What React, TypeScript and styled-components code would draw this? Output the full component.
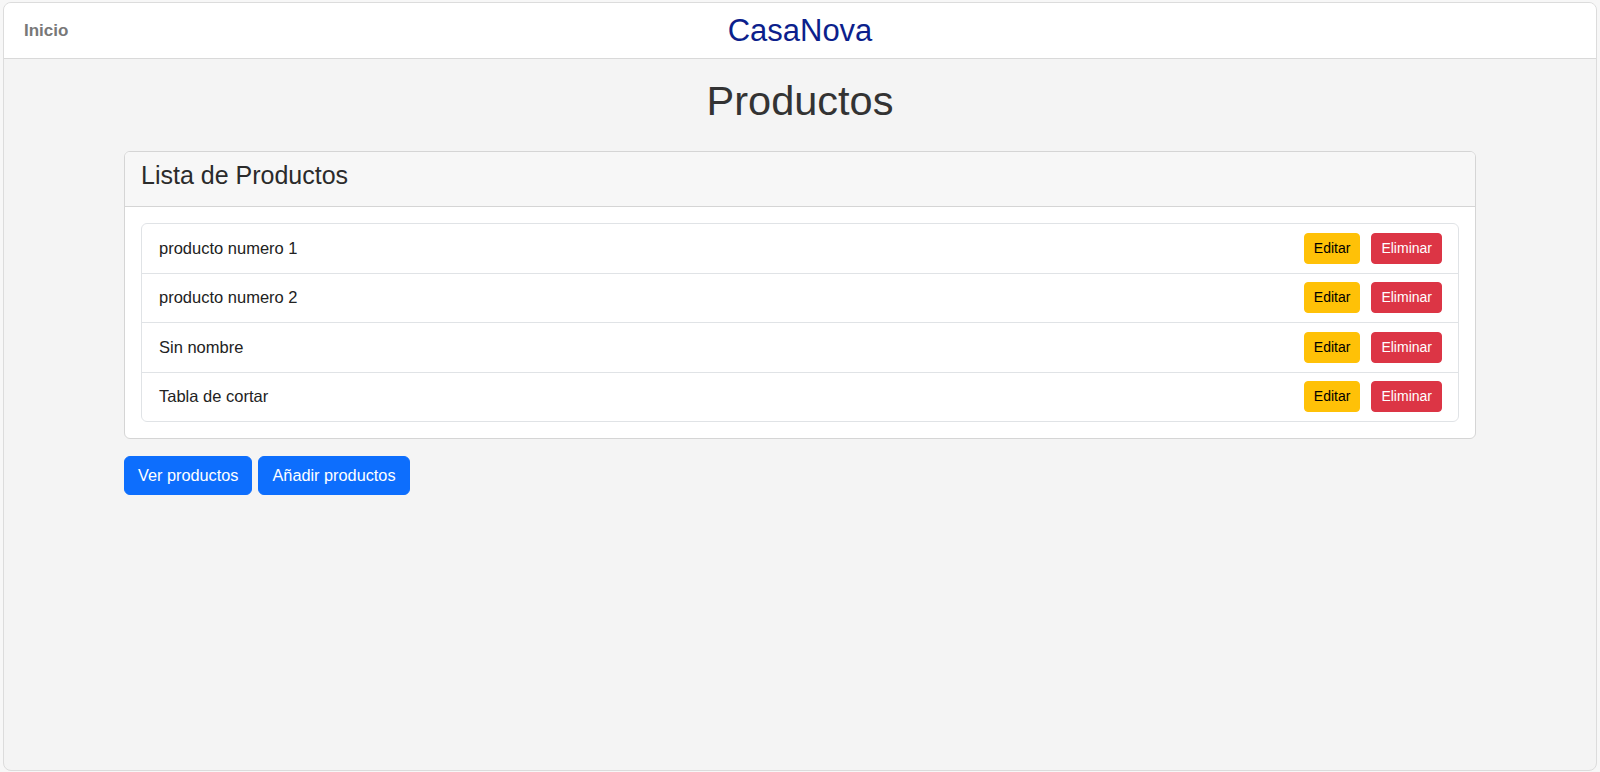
import React from "react";
import styled, {createGlobalStyle} from "styled-components";

const GlobalStyle = createGlobalStyle`
  html, body {
    margin: 0;
    padding: 0;
    background: #f7f7f7;
  }

  body {
    font-family: "Liberation Sans", Arial, sans-serif;
    color: #212529;
  }

  * {
    box-sizing: border-box;
  }
`;

const Frame = styled.div`
  margin: 2px 3px 1px 3px;
  height: 769px;
  border: 1px solid #dcdcdc;
  border-radius: 8px;
  background: #f4f4f4;
  overflow: hidden;
  display: flex;
  flex-direction: column;
`;

const Header = styled.header`
  height: 56px;
  flex: 0 0 auto;
  background: #fff;
  border-bottom: 1px solid #d9d9d9;
  display: grid;
  grid-template-columns: 1fr auto 1fr;
  align-items: center;
  padding: 0 20px;
`;

const NavLink = styled.a`
  font-size: 17px;
  font-weight: bold;
  color: #787878;
  text-decoration: none;
  justify-self: start;
`;

const Brand = styled.div`
  font-size: 31px;
  color: #0c1f8c;
`;

const Main = styled.main`
  width: 1352px;
  margin: 0 auto;
  padding-top: 17px;
`;

const Title = styled.h1`
  margin: 0 0 25px 0;
  font-size: 41.5px;
  font-weight: normal;
  line-height: 1.2;
  text-align: center;
  color: #333;
`;

const Card = styled.section`
  background: #fff;
  border: 1px solid #d5d5d5;
  border-radius: 6px;
  overflow: hidden;
`;

const CardHeader = styled.div`
  background: #f7f7f7;
  border-bottom: 1px solid #d5d5d5;
  padding: 8px 16px 16px 16px;
`;

const CardTitle = styled.h4`
  margin: 0;
  font-size: 25px;
  font-weight: normal;
  line-height: 30px;
  color: #2b2b2b;
`;

const CardBody = styled.div`
  padding: 16px;
`;

const List = styled.ul`
  list-style: none;
  margin: 0;
  padding: 0;
  border: 1px solid #e0e3e6;
  border-radius: 6px;
`;

const Row = styled.li`
  height: 49.4px;
  display: flex;
  align-items: center;
  padding: 0 16px 0 17px;
  border-top: 1px solid #e0e3e6;
  font-size: 16.5px;
  color: #222;

  &:first-child {
    border-top: none;
    height: 49px;
  }
`;

const RowName = styled.span`
  flex: 1;
`;

const Actions = styled.div`
  display: flex;
  gap: 11px;
`;

const SmallButton = styled.button<{ $variant: "warning" | "danger" }>`
  font-family: inherit;
  font-size: 14px;
  line-height: 21px;
  padding: 4px 9px;
  border-radius: 4px;
  border: 1px solid ${({$variant}) => ($variant === "warning" ? "#ffc107" : "#dc3545")};
  background: ${({$variant}) => ($variant === "warning" ? "#ffc107" : "#dc3545")};
  color: ${({$variant}) => ($variant === "warning" ? "#000" : "#fff")};
  cursor: pointer;
`;

const Toolbar = styled.div`
  display: flex;
  gap: 6px;
  margin-top: 17px;
`;

const PrimaryButton = styled.button`
  font-family: inherit;
  font-size: 16.3px;
  line-height: 25px;
  padding: 6px 13px;
  border-radius: 6px;
  border: 1px solid #0d6efd;
  background: #0d6efd;
  color: #fff;
  cursor: pointer;
`;

const productos = [
  "producto numero 1",
  "producto numero 2",
  "Sin nombre",
  "Tabla de cortar",
];

export default function App() {
  return (
    <>
      <GlobalStyle/>
      <Frame>
        <Header>
          <NavLink href="#">Inicio</NavLink>
          <Brand>CasaNova</Brand>
          <span/>
        </Header>
        <Main>
          <Title>Productos</Title>
          <Card>
            <CardHeader>
              <CardTitle>Lista de Productos</CardTitle>
            </CardHeader>
            <CardBody>
              <List>
                {productos.map((p) => (
                  <Row key={p}>
                    <RowName>{p}</RowName>
                    <Actions>
                      <SmallButton $variant="warning">Editar</SmallButton>
                      <SmallButton $variant="danger">Eliminar</SmallButton>
                    </Actions>
                  </Row>
                ))}
              </List>
            </CardBody>
          </Card>
          <Toolbar>
            <PrimaryButton>Ver productos</PrimaryButton>
            <PrimaryButton>Añadir productos</PrimaryButton>
          </Toolbar>
        </Main>
      </Frame>
    </>
  );
}
